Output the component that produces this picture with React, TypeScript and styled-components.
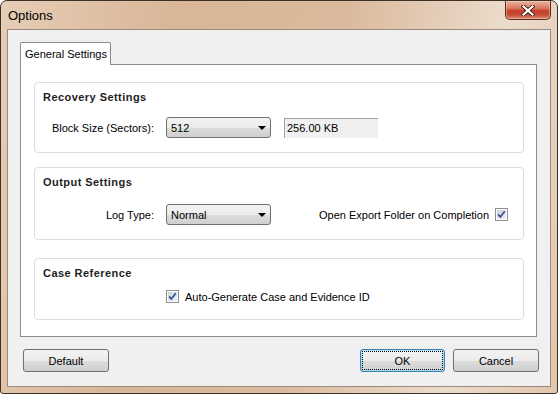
import styled, { createGlobalStyle, css } from "styled-components";

const GlobalStyle = createGlobalStyle`
  html, body {
    margin: 0;
    padding: 0;
    overflow: hidden;
    background: #ffffff;
  }
  body {
    font-family: "Liberation Sans", Arial, sans-serif;
    font-size: 11px;
    color: #000;
  }
`;

const Janela = styled.div`
  box-sizing: border-box;
  width: 558px;
  height: 394px;
  display: flex;
  flex-direction: column;
  border: 1px solid #3e3226;
  border-radius: 7px 7px 3px 3px;
  background: linear-gradient(100deg, #e6cdb6 0%, #d9b698 28%, #dab99c 55%, #ecdccd 82%, #e2c6ad 100%);
  padding: 0 6px 6px 6px;
  overflow: hidden;
`;

const BarraTitulo = styled.div`
  flex-shrink: 0;
  height: 28px;
  display: flex;
  align-items: center;
  justify-content: space-between;
  padding-left: 1px;
`;

const Titulo = styled.span`
  font-size: 13px;
  color: #000;
`;

const BotaoFechar = styled.div`
  align-self: flex-start;
  box-sizing: border-box;
  width: 46px;
  height: 19px;
  display: flex;
  align-items: center;
  justify-content: center;
  border: 1px solid #5a2a1e;
  border-top: none;
  border-radius: 0 0 5px 5px;
  background: linear-gradient(180deg, #eab3a2 0%, #d97a62 40%, #c4402a 55%, #c64a32 75%, #dd8a70 100%);
  box-shadow: inset 0 0 0 1px rgba(255, 220, 200, 0.45);
`;

const Cliente = styled.div`
  flex: 1;
  min-height: 0;
  display: flex;
  flex-direction: column;
  border: 1px solid #9c8b7c;
  background: #f0f0f0;
  padding: 12px 13px 13px 12px;
`;

const AbaLinha = styled.div`
  display: flex;
`;

const Aba = styled.div`
  position: relative;
  z-index: 1;
  height: 22px;
  line-height: 22px;
  padding: 0 3px 0 4px;
  margin-bottom: -1px;
  background: #fff;
  border: 1px solid #898c95;
  border-bottom: none;
  border-radius: 2px 2px 0 0;
`;

const Painel = styled.div`
  box-sizing: border-box;
  height: 273px;
  flex-shrink: 0;
  display: flex;
  flex-direction: column;
  background: #fff;
  border: 1px solid #898c95;
  padding: 17px 12px 0 13px;
`;

const Grupo = styled.div<{ $altura: number; $topo?: number }>`
  box-sizing: border-box;
  flex-shrink: 0;
  height: ${(p) => p.$altura}px;
  margin-top: ${(p) => p.$topo ?? 0}px;
  border: 1px solid #d5dfe5;
  border-radius: 4px;
  padding: 7px 8px 0 8px;
`;

const TituloGrupo = styled.div`
  font-weight: bold;
  line-height: 14px;
  letter-spacing: 0.45px;
  color: #1e1e1e;
`;

const Linha = styled.div<{ $topo: number }>`
  display: flex;
  align-items: center;
  margin-top: ${(p) => p.$topo}px;
`;

const Rotulo = styled.span`
  width: 111px;
  margin-right: 12px;
  text-align: right;
  white-space: nowrap;
`;

const Combo = styled.div`
  box-sizing: border-box;
  width: 105px;
  height: 21px;
  display: flex;
  align-items: center;
  justify-content: space-between;
  padding: 0 4px 0 4px;
  border: 1px solid #707070;
  border-radius: 3px;
  background: linear-gradient(180deg, #f3f3f3 0%, #ebebeb 50%, #dddddd 51%, #cfcfcf 100%);
`;

const Seta = styled.span`
  width: 0;
  height: 0;
  border-left: 4px solid transparent;
  border-right: 4px solid transparent;
  border-top: 4px solid #000;
`;

const CampoLeitura = styled.div`
  box-sizing: border-box;
  width: 94px;
  height: 20px;
  margin-left: 13px;
  display: flex;
  align-items: center;
  padding-left: 2px;
  background: #f0f0f0;
  border-top: 1px solid #a0a0a0;
  border-left: 1px solid #a0a0a0;
`;

const Espaco = styled.div`
  flex: 1;
`;

const Recuo = styled.div<{ $largura: number }>`
  width: ${(p) => p.$largura}px;
  flex-shrink: 0;
`;

const TextoCheck = styled.span<{ $lado: "esquerda" | "direita" }>`
  white-space: nowrap;
  ${(p) =>
    p.$lado === "esquerda"
      ? css`
          margin-right: 6px;
        `
      : css`
          margin-left: 6px;
        `}
`;

const LinhaBotoes = styled.div`
  display: flex;
  gap: 8px;
  margin: 12px -2px 0 3px;
`;

const Botao = styled.button<{ $padrao?: boolean; $largura: number }>`
  box-sizing: border-box;
  width: ${(p) => p.$largura}px;
  height: 23px;
  font-family: "Liberation Sans", Arial, sans-serif;
  font-size: 11px;
  color: #000;
  border: 1px solid #707070;
  border-radius: 3px;
  background: linear-gradient(180deg, #f3f3f3 0%, #ebebeb 50%, #dddddd 51%, #cfcfcf 100%);
  padding: 0;

  ${(p) =>
    p.$padrao &&
    css`
      border-color: #3c7fb1;
      box-shadow: inset 0 0 0 1px #a9dcf6;
      outline: 1px dotted #000;
      outline-offset: -3px;
    `}
`;

function CaixaMarcada() {
  return (
    <svg width="13" height="13" viewBox="0 0 13 13">
      <rect x="0.5" y="0.5" width="12" height="12" fill="#fff" stroke="#8e8f8f" />
      <defs>
        <linearGradient id="fundoCheck" x1="0" y1="0" x2="1" y2="1">
          <stop offset="0" stopColor="#cbd1dc" />
          <stop offset="1" stopColor="#eef0f4" />
        </linearGradient>
      </defs>
      <rect x="2" y="2" width="9" height="9" fill="url(#fundoCheck)" />
      <path d="M3.2 6.4 L5.3 9 L9.8 3.2" fill="none" stroke="#3b4d91" strokeWidth="1.7" />
    </svg>
  );
}

function IconeFechar() {
  return (
    <svg width="14" height="11" viewBox="0 0 14 11">
      <path d="M2.5 1.5 L11.5 9.5 M11.5 1.5 L2.5 9.5" stroke="#4a2018" strokeWidth="4" strokeLinecap="square" />
      <path d="M2.5 1.5 L11.5 9.5 M11.5 1.5 L2.5 9.5" stroke="#ffffff" strokeWidth="2.2" strokeLinecap="square" />
    </svg>
  );
}

export default function App() {
  return (
    <>
      <GlobalStyle />
      <Janela>
        <BarraTitulo>
          <Titulo>Options</Titulo>
          <BotaoFechar>
            <IconeFechar />
          </BotaoFechar>
        </BarraTitulo>
        <Cliente>
          <AbaLinha>
            <Aba>General Settings</Aba>
          </AbaLinha>
          <Painel>
            <Grupo $altura={71}>
              <TituloGrupo>Recovery Settings</TituloGrupo>
              <Linha $topo={13}>
                <Rotulo>Block Size (Sectors):</Rotulo>
                <Combo>
                  <span>512</span>
                  <Seta />
                </Combo>
                <CampoLeitura>256.00 KB</CampoLeitura>
              </Linha>
            </Grupo>
            <Grupo $altura={73} $topo={14}>
              <TituloGrupo>Output Settings</TituloGrupo>
              <Linha $topo={15}>
                <Rotulo>Log Type:</Rotulo>
                <Combo>
                  <span>Normal</span>
                  <Seta />
                </Combo>
                <Espaco />
                <TextoCheck $lado="esquerda">Open Export Folder on Completion</TextoCheck>
                <CaixaMarcada />
                <Recuo $largura={7} />
              </Linha>
            </Grupo>
            <Grupo $altura={62} $topo={18}>
              <TituloGrupo>Case Reference</TituloGrupo>
              <Linha $topo={10}>
                <Recuo $largura={123} />
                <CaixaMarcada />
                <TextoCheck $lado="direita">Auto-Generate Case and Evidence ID</TextoCheck>
              </Linha>
            </Grupo>
          </Painel>
          <LinhaBotoes>
            <Botao $largura={86}>Default</Botao>
            <Espaco />
            <Botao $padrao $largura={85}>OK</Botao>
            <Botao $largura={86}>Cancel</Botao>
          </LinhaBotoes>
        </Cliente>
      </Janela>
    </>
  );
}
